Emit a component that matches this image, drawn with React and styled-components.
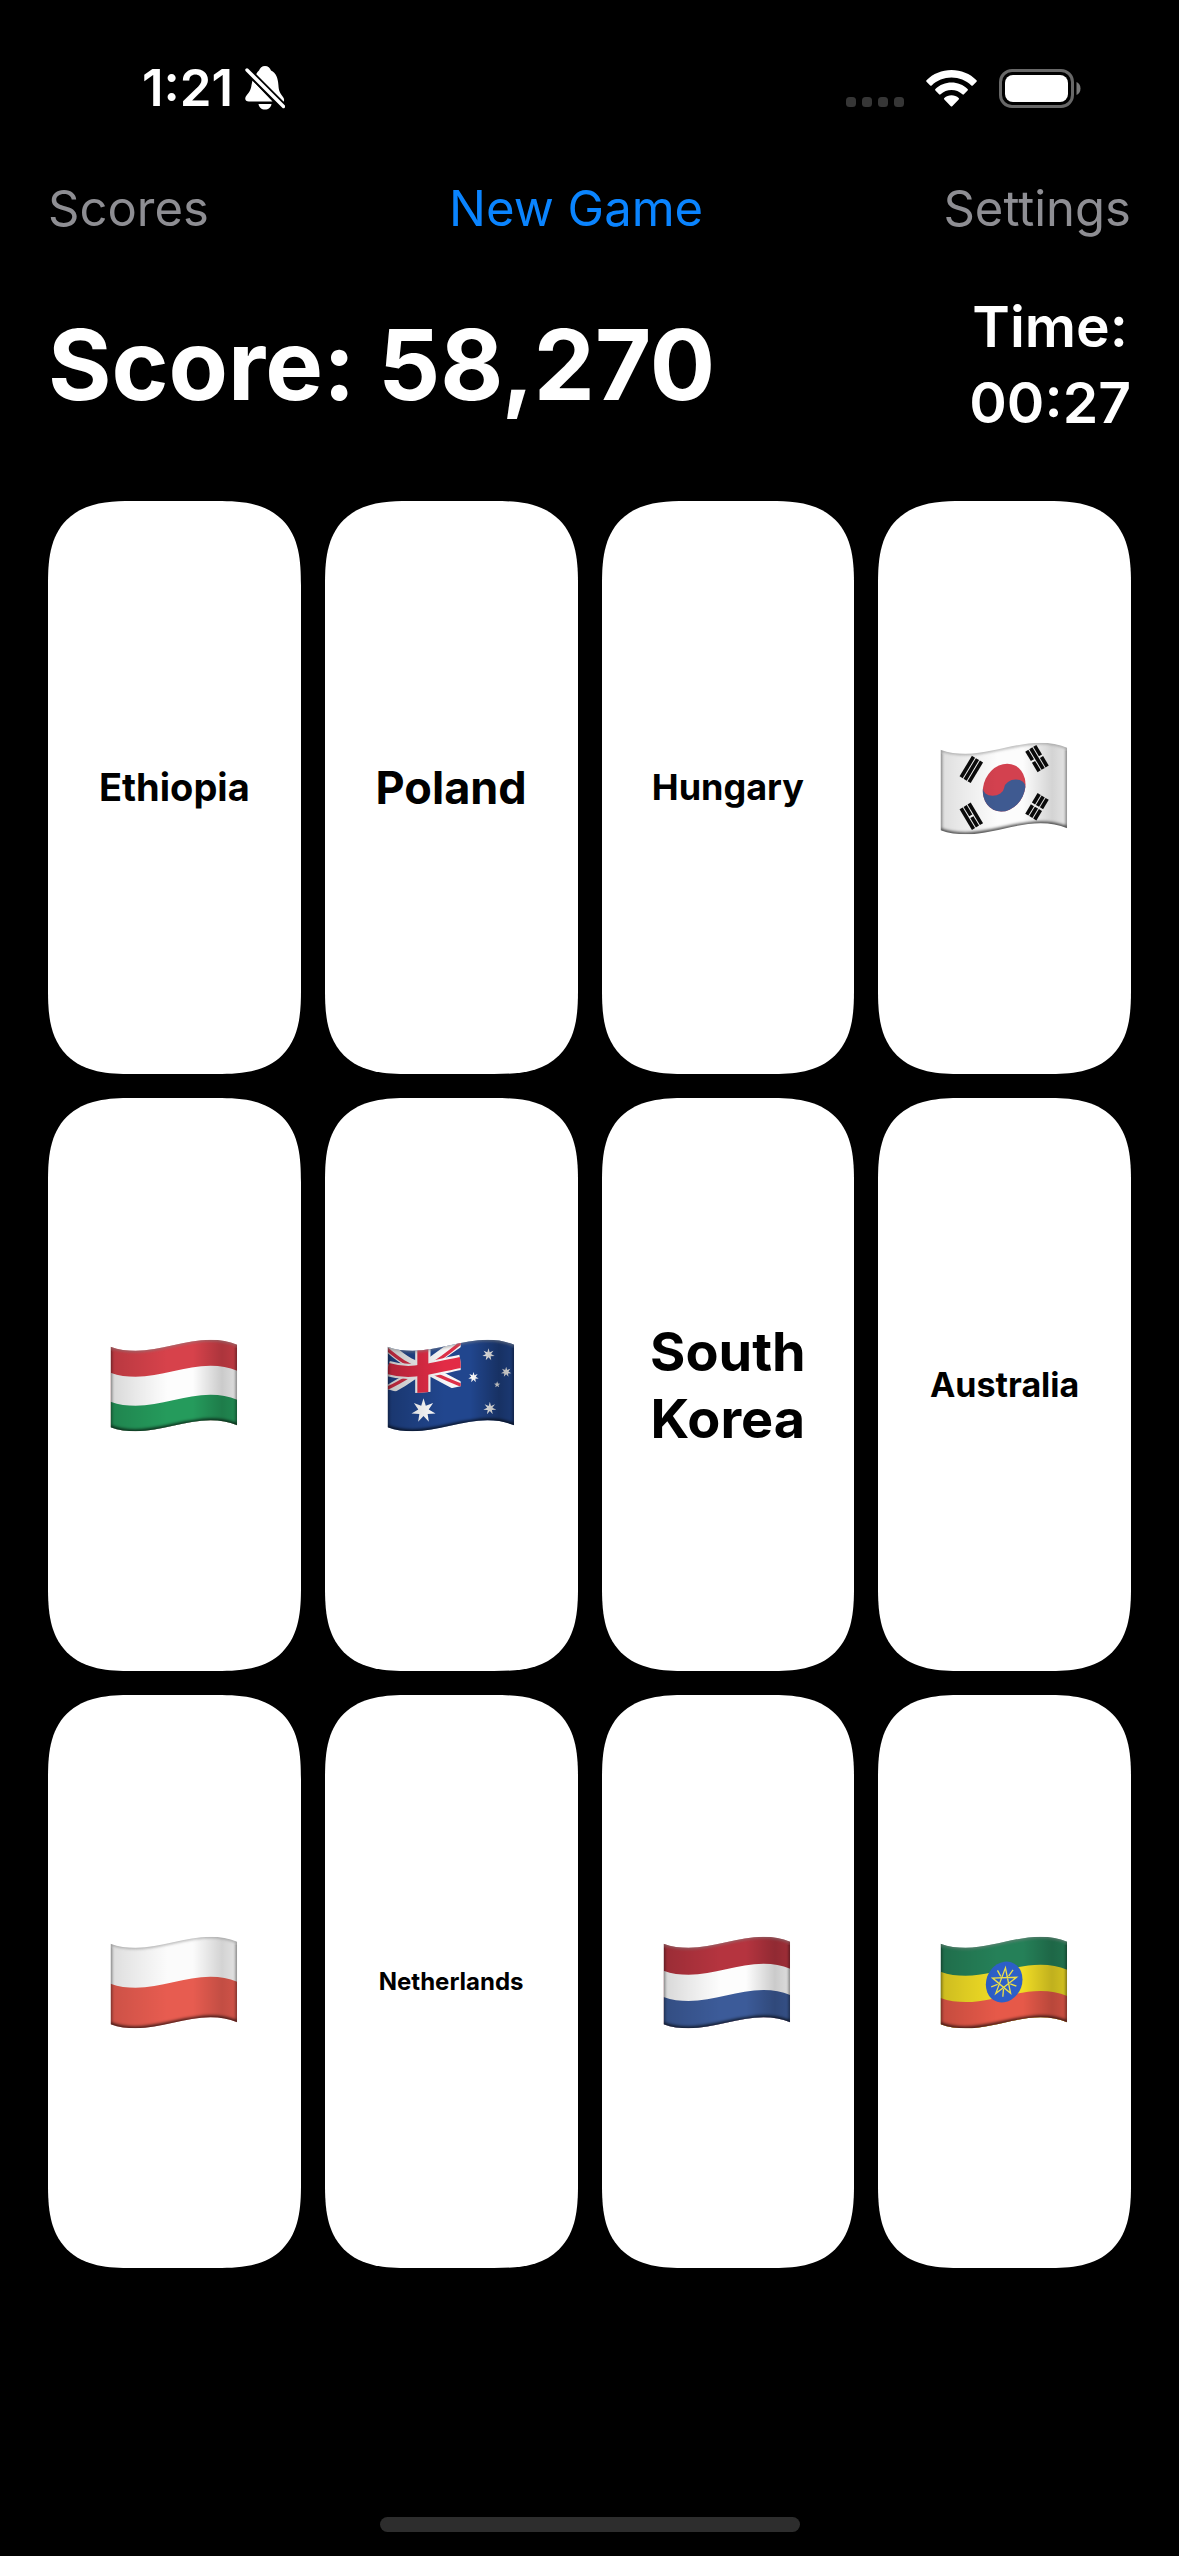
import React from "react";
import styled, { createGlobalStyle } from "styled-components";

const GlobalStyle = createGlobalStyle`
  *, *::before, *::after { box-sizing: border-box; }
  body { margin: 0; background: #000; }
  button { font: inherit; }
`;

const Screen = styled.div`
  display: flex;
  flex-direction: column;
  min-height: 100vh;
  background: #000;
  color: #fff;
  font-family: Inter, "Liberation Sans", sans-serif;
`;

const StatusBar = styled.header`
  display: flex;
  align-items: center;
  justify-content: space-between;
  height: 176px;
  padding: 0 98px 0 142px;
`;

const StatusGroup = styled.div`
  display: flex;
  align-items: center;
  gap: ${(p) => p.$gap}px;
`;

const Clock = styled.time`
  font-size: 51px;
  line-height: 60px;
  font-weight: 600;
`;

const NavBar = styled.nav`
  display: flex;
  align-items: center;
  justify-content: space-between;
  height: 66px;
  padding: 0 48px;
`;

const NavButton = styled.button`
  padding: 0;
  border: 0;
  background: none;
  color: ${(p) => (p.$primary ? "#0a84ff" : "#8e8e93")};
  font-size: 49px;
  line-height: 60px;
  cursor: pointer;
`;

const ScoreBar = styled.section`
  display: flex;
  align-items: center;
  justify-content: space-between;
  height: 245px;
  margin-bottom: 14px;
  padding: 0 48px;
`;

const Score = styled.h1`
  margin: 0;
  font-size: 97px;
  line-height: 120px;
  font-weight: 700;
`;

const Timer = styled.div`
  display: flex;
  flex-direction: column;
  align-items: center;
  font-size: 57px;
  line-height: 76px;
  font-weight: 600;
`;

const Board = styled.main`
  flex: 1;
  display: grid;
  grid-template-columns: repeat(4, minmax(0, 1fr));
  grid-template-rows: repeat(3, minmax(320px, 1fr));
  gap: 24px;
  padding: 0 48px;
`;

const Card = styled.button`
  display: flex;
  align-items: center;
  justify-content: center;
  padding: 0 24px;
  border: 0;
  border-radius: 66px;
  background: #fff;
  color: #000;
  font-size: ${(p) => p.$size}px;
  line-height: 67px;
  font-weight: 700;
  text-align: center;
  cursor: pointer;

  @supports (corner-shape: superellipse(1.45)) {
    border-radius: 84px;
    corner-shape: superellipse(1.45);
  }
`;

const FlagArt = styled.svg`
  width: 127px;
  height: 96px;
  flex: none;
  overflow: visible;
`;

const Footer = styled.footer`
  display: flex;
  align-items: flex-end;
  justify-content: center;
  height: 288px;
  padding-bottom: 24px;
`;

const HomeIndicator = styled.div`
  width: 420px;
  height: 15px;
  border-radius: 8px;
  background: #2d2d2d;
`;

const wave = (y) =>
  `C25 ${y + 9} 50 ${y + 12} 75 ${y + 12} C150 ${y + 12} 225 ${y - 21} 300 ${y - 21} C330 ${y - 21} 355 ${y - 16} 380 ${y - 6}`;
const waveBack = (y) =>
  `C355 ${y - 16} 330 ${y - 21} 300 ${y - 21} C225 ${y - 21} 150 ${y + 12} 75 ${y + 12} C50 ${y + 12} 25 ${y + 9} 0 ${y}`;
const band = (top, bottom) =>
  `M0 ${top} ${wave(top)} L380 ${bottom - 6} ${waveBack(bottom)} Z`;

const TOP = 33;
const BOTTOM = 275;

function star(cx, cy, outer, inner, points) {
  const out = [];
  for (let i = 0; i < points * 2; i += 1) {
    const r = i % 2 ? inner : outer;
    const a = (Math.PI * i) / points - Math.PI / 2;
    out.push(`${(cx + r * Math.cos(a)).toFixed(1)},${(cy + r * Math.sin(a)).toFixed(1)}`);
  }
  return out.join(" ");
}

function Flag({ id, label, edge = "#000", shade = 0.2, children }) {
  return (
    <FlagArt viewBox="2 4 380 288" role="img" aria-label={label}>
      <defs>
        <clipPath id={`${id}-clip`}>
          <path d={band(TOP, BOTTOM)} />
        </clipPath>
        <linearGradient id={`${id}-fold`}>
          <stop offset="0" stopColor="#000" stopOpacity={shade * 0.75} />
          <stop offset="0.2" stopColor="#000" stopOpacity={shade * 0.4} />
          <stop offset="0.45" stopColor="#000" stopOpacity="0" />
          <stop offset="0.65" stopColor="#000" stopOpacity="0" />
          <stop offset="0.88" stopColor="#000" stopOpacity={shade} />
          <stop offset="1" stopColor="#000" stopOpacity={shade * 0.6} />
        </linearGradient>
        <filter id={`${id}-soft`} x="-10%" y="-10%" width="120%" height="120%">
          <feGaussianBlur stdDeviation="5" />
        </filter>
      </defs>
      <g clipPath={`url(#${id}-clip)`}>
        {children}
        <path d={band(TOP, BOTTOM)} fill={`url(#${id}-fold)`} />
        <g filter={`url(#${id}-soft)`} fill="none" stroke={edge}>
          <path d={band(TOP, BOTTOM)} strokeWidth="7" strokeOpacity="0.6" />
          <path d={`M0 ${BOTTOM} ${wave(BOTTOM)}`} strokeWidth="13" strokeOpacity="0.45" />
          <path d={`M0 ${TOP} ${wave(TOP)}`} stroke="#fff" strokeWidth="7" strokeOpacity="0.4" />
        </g>
      </g>
    </FlagArt>
  );
}

function Stripes({ colors, edges }) {
  return colors.map((c, i) => (
    <path key={c} d={band(i ? edges[i - 1] : TOP - 4, BOTTOM + 4)} fill={c} />
  ));
}

function Trigram({ x, y, angle, broken }) {
  return (
    <g transform={`translate(${x} ${y}) rotate(${angle})`} fill="#0b0b0b">
      {broken.map((split, i) => {
        const left = -19 + i * 14;
        return split ? (
          <React.Fragment key={i}>
            <rect x={left} y="-36" width="11" height="33" />
            <rect x={left} y="3" width="11" height="33" />
          </React.Fragment>
        ) : (
          <rect key={i} x={left} y="-36" width="11" height="72" />
        );
      })}
    </g>
  );
}

const HungaryFlag = () => (
  <Flag id="hu" label="Flag of Hungary">
    <Stripes colors={["#d7424b", "#fdfdfd", "#259b5c"]} edges={[111, 198]} />
  </Flag>
);

const PolandFlag = () => (
  <Flag id="pl" label="Flag of Poland" shade={0.16}>
    <Stripes colors={["#fbfbfb", "#e75c50"]} edges={[153]} />
  </Flag>
);

const NetherlandsFlag = () => (
  <Flag id="nl" label="Flag of the Netherlands">
    <Stripes colors={["#b5343f", "#fdfdfd", "#3c5b99"]} edges={[114, 193]} />
  </Flag>
);

const EthiopiaFlag = () => (
  <Flag id="et" label="Flag of Ethiopia">
    <Stripes colors={["#258058", "#f0dc25", "#e65949"]} edges={[117, 196]} />
    <g transform="translate(191 148) skewY(-8)">
      <ellipse rx="55" ry="61" fill="#2d5fc8" />
      <g fill="none" stroke="#ecdf4a" strokeWidth="4">
        <polygon
          points={[0, 2, 4, 1, 3]
            .map((n) => {
              const a = (n * 2 * Math.PI) / 5 - Math.PI / 2 + 0.1;
              return `${(38 * Math.cos(a)).toFixed(1)},${(42 * Math.sin(a)).toFixed(1)}`;
            })
            .join(" ")}
        />
        {[0, 1, 2, 3, 4].map((n) => {
          const a = (n * 2 * Math.PI) / 5 + Math.PI / 2 + 0.1;
          return (
            <line
              key={n}
              x1={20 * Math.cos(a)}
              y1={21 * Math.sin(a)}
              x2={40 * Math.cos(a)}
              y2={44 * Math.sin(a)}
            />
          );
        })}
      </g>
    </g>
  </Flag>
);

const KoreaFlag = () => (
  <Flag id="kr" label="Flag of South Korea" shade={0.16}>
    <path d={band(TOP - 4, BOTTOM + 4)} fill="#fcfcfc" />
    <g transform="translate(191 147) skewY(-9) scale(64 71) rotate(8)">
      <circle r="1" fill="#d3414f" />
      <path d="M-1 0 A1 1 0 0 0 1 0 A.5 .34 0 0 0 0 0 A.5 .34 0 0 1 -1 0Z" fill="#3f5a91" />
    </g>
    <Trigram x={92} y={92} angle={31} broken={[false, false, false]} />
    <Trigram x={289} y={60} angle={-31} broken={[true, false, true]} />
    <Trigram x={92} y={233} angle={-31} broken={[false, true, false]} />
    <Trigram x={289} y={204} angle={31} broken={[true, true, true]} />
  </Flag>
);

const AustraliaFlag = () => (
  <Flag id="au" label="Flag of Australia" shade={0.3}>
    <defs>
      <clipPath id="au-canton">
        <path d="M0 20 L220 0 L220 152 C170 162 130 172 80 172 C50 172 25 169 0 161Z" />
      </clipPath>
    </defs>
    <path d={band(TOP - 4, BOTTOM + 4)} fill="#21468e" />
    <g clipPath="url(#au-canton)" fill="none">
      <g stroke="#f6f6f6" strokeWidth="30">
        <path d="M-4 30 C60 84 80 92 108 96 C150 116 190 140 224 156" />
        <path d="M-4 166 C60 134 80 112 108 96 C150 66 190 36 224 14" />
      </g>
      <g stroke="#dc3048" strokeWidth="10">
        <path d="M-4 38 C40 76 60 86 90 98" />
        <path d="M-4 159 C40 140 60 124 90 106" />
        <path d="M126 90 C160 70 190 46 224 18" />
        <path d="M126 108 C160 122 190 138 224 149" />
      </g>
      <g stroke="#f6f6f6" strokeWidth="46">
        <path d="M106 20 V180" />
        <path d="M0 98 C70 120 130 98 220 80" />
      </g>
      <g stroke="#e22c46" strokeWidth="33">
        <path d="M106 20 V180" />
        <path d="M0 98 C70 120 130 98 220 80" />
      </g>
    </g>
    <g fill="#fff">
      <polygon points={star(108, 225, 37, 16, 7)} />
      <polygon points={star(303, 57, 19, 8, 7)} />
      <polygon points={star(258, 125, 16, 7, 7)} />
      <polygon points={star(356, 109, 16, 7, 7)} />
      <polygon points={star(307, 218, 20, 8, 7)} />
      <polygon points={star(329, 147, 10, 4, 5)} />
    </g>
  </Flag>
);

const BellSlash = () => (
  <svg width="40" height="44" viewBox="0 0 40 44" aria-label="Silent mode" role="img">
    <path
      fill="#fff"
      d="M20 0C23 0 25 2 26 4.500C31 7 33 12 33.400 19C33.700 25 35 27 38 31C39.500 33 39.500 35 38 36.500L11 8.500C12 6.500 13 5.200 14 4.500C15 2 17 0 20 0ZM7.500 14.500L27.500 35.500H4C0 35.500-.8 32 1.500 29.500C5 25.500 6 23 6.500 19ZM13.500 38H26.500C26 41.500 23.500 43.500 20 43.500S14 41.500 13.500 38Z"
    />
    <path d="M2 4L38.500 40.500" stroke="#000" strokeWidth="7" />
    <path d="M2 4L38.500 40.500" stroke="#fff" strokeWidth="3.400" strokeLinecap="round" />
  </svg>
);

const SignalDots = () => (
  <svg width="58" height="39" viewBox="0 0 58 39" aria-label="No signal" role="img">
    {[0, 16, 32, 48].map((x) => (
      <rect key={x} x={x} y="28" width="10" height="10" rx="3.500" fill="#363636" />
    ))}
  </svg>
);

const Wifi = () => (
  <svg width="51" height="37" viewBox="0 0 51 37" aria-label="Wi-Fi" role="img" fill="#fff">
    <path d="M25.500 0C35 0 44 3.700 50.500 10.200C51 10.700 51 11.200 50.500 11.700L46.800 15.400C46.300 15.900 45.800 15.900 45.300 15.400C40 10.300 33 7.500 25.500 7.500S11 10.300 5.700 15.400C5.200 15.900 4.700 15.900 4.200 15.400L.5 11.700C0 11.200 0 10.700.5 10.200C7 3.700 16 0 25.500 0Z" />
    <path d="M25.500 12.600C31.500 12.600 37.200 14.900 41.600 19.100C42.100 19.600 42.100 20.100 41.600 20.600L37.900 24.300C37.400 24.800 36.900 24.800 36.400 24.300C33.400 21.600 29.600 20.100 25.500 20.100S17.600 21.600 14.600 24.300C14.100 24.800 13.600 24.800 13.100 24.300L9.400 20.600C8.900 20.100 8.900 19.600 9.400 19.100C13.800 14.900 19.500 12.600 25.500 12.600Z" />
    <path d="M25.500 25.300C28.200 25.300 30.700 26.200 32.700 28C33.200 28.500 33.200 29 32.700 29.500L26.200 36.200C25.700 36.700 25.300 36.700 24.800 36.200L18.300 29.500C17.800 29 17.800 28.500 18.300 28C20.300 26.200 22.800 25.300 25.500 25.300Z" />
  </svg>
);

const Battery = () => (
  <svg width="82" height="39" viewBox="0 0 82 39" aria-label="Battery full" role="img">
    <rect x="1.500" y="1.500" width="72" height="36" rx="11.500" fill="none" stroke="#686868" strokeWidth="3" />
    <rect x="6" y="6" width="63" height="27" rx="8" fill="#fff" />
    <path d="M77.500 13C80 14 81.500 16.500 81.500 19.500S80 25 77.500 26Z" fill="#7a7a7a" />
  </svg>
);

const CARDS = [
  { name: "Ethiopia", size: 38 },
  { name: "Poland", size: 45 },
  { name: "Hungary", size: 36 },
  { flag: KoreaFlag },
  { flag: HungaryFlag },
  { flag: AustraliaFlag },
  { name: "South Korea", size: 54 },
  { name: "Australia", size: 34 },
  { flag: PolandFlag },
  { name: "Netherlands", size: 24 },
  { flag: NetherlandsFlag },
  { flag: EthiopiaFlag },
];

export default function App() {
  return (
    <Screen>
      <GlobalStyle />
      <StatusBar>
        <StatusGroup $gap={12}>
          <Clock>1:21</Clock>
          <BellSlash />
        </StatusGroup>
        <StatusGroup $gap={22}>
          <SignalDots />
          <Wifi />
          <Battery />
        </StatusGroup>
      </StatusBar>
      <NavBar>
        <NavButton type="button">Scores</NavButton>
        <NavButton type="button" $primary>New Game</NavButton>
        <NavButton type="button">Settings</NavButton>
      </NavBar>
      <ScoreBar>
        <Score>Score: 58,270</Score>
        <Timer>
          <span>Time:</span>
          <span>00:27</span>
        </Timer>
      </ScoreBar>
      <Board>
        {CARDS.map(({ name, size, flag: FlagPicture }, i) => (
          <Card key={i} type="button" $size={size || 36}>
            {FlagPicture ? <FlagPicture /> : name}
          </Card>
        ))}
      </Board>
      <Footer>
        <HomeIndicator />
      </Footer>
    </Screen>
  );
}
